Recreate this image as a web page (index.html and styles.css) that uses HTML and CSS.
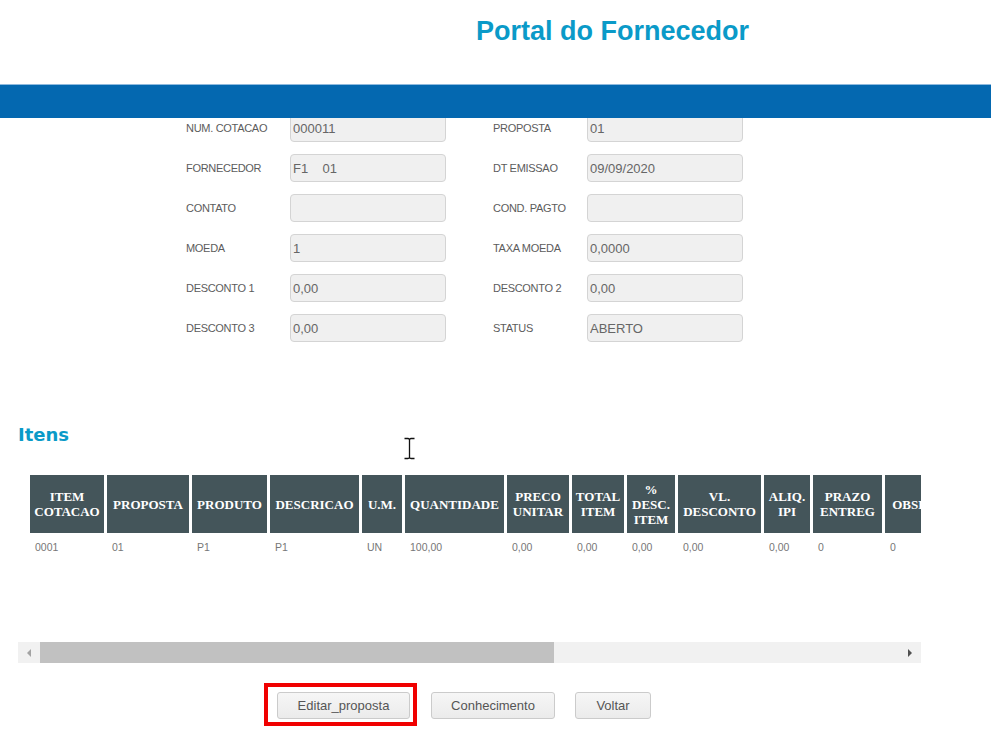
FILE: index.html
```html
<!DOCTYPE html>
<html lang="pt-BR">
<head>
    <meta charset="UTF-8">
    <title>Portal do Fornecedor</title>
    <link rel="stylesheet" href="styles.css">
</head>
<body>

    <header class="top">
        <h1 class="title">Portal do Fornecedor</h1>
    </header>
    <div class="bar"></div>

    <div class="cotacao">
        <div class="row">
            <span class="lbl">NUM. COTACAO</span><input class="fld" readonly value="000011">
            <span class="lbl lbl-r">PROPOSTA</span><input class="fld" readonly value="01">
        </div>
        <div class="row">
            <span class="lbl">FORNECEDOR</span><input class="fld" readonly value="F1    01">
            <span class="lbl lbl-r">DT EMISSAO</span><input class="fld" readonly value="09/09/2020">
        </div>
        <div class="row">
            <span class="lbl">CONTATO</span><input class="fld" readonly value="">
            <span class="lbl lbl-r">COND. PAGTO</span><input class="fld" readonly value="">
        </div>
        <div class="row">
            <span class="lbl">MOEDA</span><input class="fld" readonly value="1">
            <span class="lbl lbl-r">TAXA MOEDA</span><input class="fld" readonly value="0,0000">
        </div>
        <div class="row">
            <span class="lbl">DESCONTO 1</span><input class="fld" readonly value="0,00">
            <span class="lbl lbl-r">DESCONTO 2</span><input class="fld" readonly value="0,00">
        </div>
        <div class="row">
            <span class="lbl">DESCONTO 3</span><input class="fld" readonly value="0,00">
            <span class="lbl lbl-r">STATUS</span><input class="fld" readonly value="ABERTO">
        </div>
    </div>

    <h2 class="itensTitle">Itens</h2>

    <div class="gridWrap">
        <table class="grid">
            <thead>
                <tr>
                    <th class="c1">ITEM<br>COTACAO</th>
                    <th class="c2">PROPOSTA</th>
                    <th class="c3">PRODUTO</th>
                    <th class="c4">DESCRICAO</th>
                    <th class="c5">U.M.</th>
                    <th class="c6">QUANTIDADE</th>
                    <th class="c7">PRECO<br>UNITAR</th>
                    <th class="c8">TOTAL<br>ITEM</th>
                    <th class="c9">%<br>DESC.<br>ITEM</th>
                    <th class="c10">VL.<br>DESCONTO</th>
                    <th class="c11">ALIQ.<br>IPI</th>
                    <th class="c12">PRAZO<br>ENTREG</th>
                    <th class="c13">OBSERVACAO</th>
                </tr>
            </thead>
            <tbody>
                <tr>
                    <td>0001</td>
                    <td>01</td>
                    <td>P1</td>
                    <td>P1</td>
                    <td>UN</td>
                    <td>100,00</td>
                    <td>0,00</td>
                    <td>0,00</td>
                    <td>0,00</td>
                    <td>0,00</td>
                    <td>0,00</td>
                    <td>0</td>
                    <td>0</td>
                </tr>
            </tbody>
        </table>
    </div>

    <div class="hscroll">
        <span class="arr arr-l"></span>
        <span class="thumb"></span>
        <span class="track"></span>
        <span class="arr arr-r"></span>
    </div>

    <div class="actions">
        <span class="mark">
            <button class="btn btn-edit">Editar_proposta</button>
        </span>
        <button class="btn btn-con">Conhecimento</button>
        <button class="btn btn-back">Voltar</button>
    </div>

    <!-- text cursor -->
    <svg class="caret" width="13" height="23" viewBox="0 0 13 23">
        <path d="M1.5 1.5 H5 Q6.5 1.5 6.5 3 V20 Q6.5 21.5 5 21.5 H1.5 M11.5 1.5 H8 Q6.5 1.5 6.5 3 M6.5 20 Q6.5 21.5 8 21.5 H11.5" fill="none" stroke="#111" stroke-width="1.3"/>
    </svg>

</body>
</html>
```

FILE: styles.css
```css
html {
    margin: 0;
    padding: 0;
}

body {
    margin: 0;
    padding: 0;
    overflow: hidden;
    background: #fff;
    font-family: "Liberation Sans", Arial, sans-serif;
    position: relative;
    height: 738px;
}

.top {
    height: 84px;
}

.title {
    margin: 0;
    padding: 15px 0 0 476px;
    font-size: 27px;
    line-height: 32px;
    font-weight: bold;
    color: #0a9ac8;
}

.bar {
    position: relative;
    z-index: 1;
    height: 33px;
    border-top: 1px solid #8fbade;
    background-color: #0468b0;
}

.cotacao {
    margin: -4px 0 0 186px;
}

.row {
    display: flex;
    align-items: center;
    height: 28px;
    margin-bottom: 12px;
}

.lbl {
    width: 104px;
    font-size: 11px;
    letter-spacing: -0.3px;
    color: #5c5c5c;
}

.lbl-r {
    width: 94px;
    margin-left: 47px;
}

.fld {
    box-sizing: border-box;
    width: 156px;
    height: 28px;
    margin: 0;
    padding: 0 0 0 2px;
    border: 1px solid #d4d4d4;
    border-radius: 4px;
    background-color: #f0f0f0;
    font-family: "Liberation Sans", Arial, sans-serif;
    font-size: 13px;
    color: #666;
    outline: none;
}

.itensTitle {
    margin: 82px 0 0 18px;
    font-family: "DejaVu Sans", Verdana, sans-serif;
    font-size: 18px;
    line-height: 21px;
    font-weight: bold;
    color: #0a9ac8;
}

.gridWrap {
    margin: 30px 0 0 18px;
    width: 903px;
    height: 167px;
    overflow: hidden;
}

.grid {
    table-layout: fixed;
    width: 965px;
    margin-left: 9px;
    border-collapse: separate;
    border-spacing: 3px 0;
}

.grid th {
    height: 58px;
    padding: 0;
    background-color: #44555a;
    color: #fff;
    font-family: "Liberation Serif", "Times New Roman", serif;
    font-size: 13px;
    line-height: 15px;
    font-weight: bold;
    text-align: center;
    vertical-align: middle;
    white-space: nowrap;
}

.c1 { width: 74px; }
.c2 { width: 82px; }
.c3 { width: 75px; }
.c4 { width: 89px; }
.c5 { width: 40px; }
.c6 { width: 99px; }
.c7 { width: 62px; }
.c8 { width: 52px; }
.c9 { width: 48px; }
.c10 { width: 83px; }
.c11 { width: 46px; }
.c12 { width: 69px; }
.c13 { width: 104px; }

.grid td {
    height: 28px;
    padding: 0 0 0 5px;
    font-size: 10.5px;
    color: #777;
    vertical-align: middle;
    white-space: nowrap;
}

.hscroll {
    display: flex;
    align-items: center;
    margin-left: 18px;
    width: 903px;
    height: 21px;
    background-color: #f1f1f1;
}

.arr {
    width: 22px;
    height: 21px;
    display: flex;
    align-items: center;
    justify-content: center;
}

.arr-l::before {
    content: "";
    border-top: 4px solid transparent;
    border-bottom: 4px solid transparent;
    border-right: 4px solid #a3a3a3;
}

.arr-r::before {
    content: "";
    border-top: 4px solid transparent;
    border-bottom: 4px solid transparent;
    border-left: 4px solid #505050;
}

.thumb {
    width: 514px;
    height: 21px;
    background-color: #c1c1c1;
}

.track {
    flex: 1;
}

.actions {
    display: flex;
    align-items: center;
    margin: 29px 0 0 277px;
}

.mark {
    position: relative;
    display: flex;
}

.mark::after {
    content: "";
    position: absolute;
    left: -13px;
    top: -9px;
    right: -7px;
    bottom: -7px;
    border: 4px solid #f00000;
}

.btn {
    box-sizing: border-box;
    height: 27px;
    margin: 0;
    padding: 0;
    border: 1px solid #cbcbcb;
    border-radius: 3px;
    background: linear-gradient(#f6f6f6, #ebebeb);
    font-family: "Liberation Sans", Arial, sans-serif;
    font-size: 13px;
    color: #555;
}

.btn-edit {
    width: 133px;
}

.btn-con {
    width: 124px;
    margin-left: 21px;
}

.btn-back {
    width: 76px;
    margin-left: 20px;
}

.caret {
    position: absolute;
    left: 403px;
    top: 437px;
}
```
